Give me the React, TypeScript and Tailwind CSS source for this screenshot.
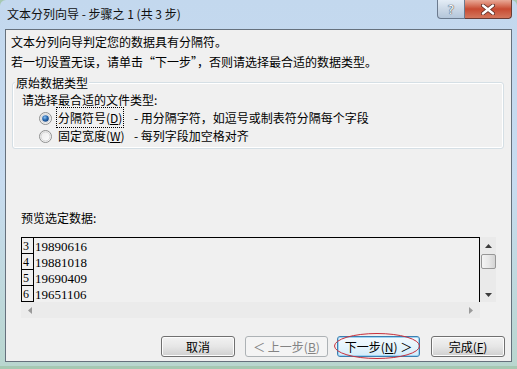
import React from 'react';

const Radio: React.FC<{ checked?: boolean }> = ({ checked }) => (
  <svg width="13" height="13" viewBox="0 0 13 13" className="shrink-0">
    <defs>
      <linearGradient id={checked ? 'rg-on' : 'rg-off'} x1="0" y1="0" x2="1" y2="1">
        <stop offset="0" stopColor="#e9e9e9" />
        <stop offset="1" stopColor="#ffffff" />
      </linearGradient>
      <radialGradient id="dot" cx="0.4" cy="0.35" r="0.7">
        <stop offset="0" stopColor="#8fc3f0" />
        <stop offset="0.5" stopColor="#2c6db4" />
        <stop offset="1" stopColor="#123f7a" />
      </radialGradient>
    </defs>
    <circle cx="6.5" cy="6.5" r="6" fill={`url(#${checked ? 'rg-on' : 'rg-off'})`} stroke="#8e8f8f" />
    <circle cx="6.5" cy="6.5" r="4.5" fill="none" stroke="#d6d6d6" />
    {checked && <circle cx="6.5" cy="6.5" r="3.3" fill="url(#dot)" />}
  </svg>
);

const Arrow: React.FC<{ dir: 'up' | 'down' | 'left' | 'right'; color?: string }> = ({ dir, color = '#3c3c3c' }) => {
  const pts = {
    up: '0,4 7,4 3.5,0',
    down: '0,0 7,0 3.5,4',
    left: '4,0 4,7 0,3.5',
    right: '0,0 0,7 4,3.5',
  }[dir];
  const vertical = dir === 'up' || dir === 'down';
  return (
    <svg width={vertical ? 7 : 4} height={vertical ? 4 : 7}>
      <polygon points={pts} fill={color} />
    </svg>
  );
};

const WinButton: React.FC<{ children: React.ReactNode; width: string; variant?: 'normal' | 'disabled' | 'default' }> = ({
  children,
  width,
  variant = 'normal',
}) => {
  if (variant === 'disabled') {
    return (
      <div className={`${width} h-[21px] flex items-center justify-center rounded-[3px] border border-[#adb2b5] bg-[#f4f4f4] text-[#838383]`}>
        {children}
      </div>
    );
  }
  if (variant === 'default') {
    return (
      <div className={`${width} h-[21px] flex items-center justify-center rounded-[3px] border border-[#3c7fb1] bg-gradient-to-b from-[#f3fafe] via-[#e6f4fc] to-[#d3ecfa] shadow-[inset_0_0_0_1px_#9fd4f3]`}>
        {children}
      </div>
    );
  }
  return (
    <div className={`${width} h-[21px] flex items-center justify-center rounded-[3px] border border-[#707070] bg-gradient-to-b from-[#f2f2f2] via-[#e6e6e6] to-[#cfcfcf] shadow-[inset_0_0_0_1px_#fcfcfc]`}>
      {children}
    </div>
  );
};

const rows = [
  { n: '3', v: '19890616' },
  { n: '4', v: '19881018' },
  { n: '5', v: '19690409' },
  { n: '6', v: '19651106' },
];

export default function App() {
  return (
    <div className="relative w-[517px] h-[369px] overflow-hidden bg-[#a6c8b2] font-['Noto_Sans_CJK_SC',sans-serif] text-[12px] leading-none text-black">
      <div className="flex flex-col h-[366px] px-[5px] pb-[4px] rounded-t-[6px] bg-gradient-to-b from-[#c3d8ee] via-[#c8dcf0] to-[#b9d6cf]">
        {/* title bar */}
        <div className="flex h-[29px] shrink-0 items-start">
          <div className="flex-1 pl-[2px] pt-[7px] text-[12px] leading-[14px] text-[#111]">文本分列向导 - 步骤之 1 (共 3 步)</div>
          <div className="flex h-[19px]">
            <div className="w-[28px] h-[19px] flex items-center justify-center rounded-bl-[4px] border border-t-0 border-[#6b7a8e] bg-gradient-to-b from-[#e4edf6] via-[#cbd8e6] to-[#b4c6da]">
              <span className="text-[13px] leading-none font-['DejaVu_Sans',sans-serif] text-white [text-shadow:0_0_1px_#203040,0_0_1px_#203040]">?</span>
            </div>
            <div className="w-[47px] h-[19px] flex items-center justify-center rounded-br-[4px] border border-t-0 border-l-0 border-[#6b3b33] bg-gradient-to-b from-[#e8a997] via-[#c74a31] to-[#d3765c]">
              <svg width="14" height="11" viewBox="0 0 14 11">
                <path d="M2 1.5 L12 9.5 M12 1.5 L2 9.5" stroke="#5a2a22" strokeWidth="4" strokeLinecap="round" />
                <path d="M2 1.5 L12 9.5 M12 1.5 L2 9.5" stroke="#ffffff" strokeWidth="2.4" strokeLinecap="round" />
              </svg>
            </div>
          </div>
        </div>

        {/* client area */}
        <div className="flex flex-1 flex-col border border-[#66717d] bg-[#f0f0f0]">
          <div className="pt-[2px] pl-[5px]">
            <div className="h-[20px] flex items-center">文本分列向导判定您的数据具有分隔符。</div>
            <div className="h-[20px] flex items-center">若一切设置无误，请单击“下一步”，否则请选择最合适的数据类型。</div>
          </div>

          {/* group box */}
          <div className="relative mt-[10px] ml-[6px] mr-[7px] h-[67px] rounded-[3px] border border-[#d5dfe5] shadow-[inset_0_0_0_1px_#ffffff] pl-[9px] pt-[8px]">
            <div className="absolute -top-[8px] left-[2px] bg-[#f0f0f0] px-[1px] h-[16px] flex items-center">原始数据类型</div>
            <div className="h-[18px] flex items-center">请选择最合适的文件类型:</div>
            <div className="h-[18px] flex items-center pl-[17px]">
              <Radio checked />
              <div className="w-[82px] pl-[4px]">
                <span className="border border-dotted border-black px-[1px] py-[1px]">
                  分隔符号(<span className="underline">D</span>)
                </span>
              </div>
              <span>- 用分隔字符，如逗号或制表符分隔每个字段</span>
            </div>
            <div className="h-[18px] flex items-center pl-[17px]">
              <Radio />
              <div className="w-[82px] pl-[6px]">
                固定宽度(<span className="underline">W</span>)
              </div>
              <span>- 每列字段加空格对齐</span>
            </div>
          </div>

          <div className="mt-[60px] pl-[15px] h-[18px] flex items-center">预览选定数据:</div>

          {/* preview */}
          <div className="mt-[10px] ml-[15px] flex h-[81px] w-[475px]">
            <div className="flex w-[459px] flex-col">
              <div className="h-[65px] overflow-hidden border border-b-0 border-black bg-[#f0f0f0]">
                {rows.map((r) => (
                  <div key={r.n} className="flex h-[16px] shrink-0">
                    <div className="w-[12px] h-[16px] border-r border-b border-black flex items-end pl-[1px] font-['Liberation_Serif',serif] text-[12px] leading-[13px]">
                      {r.n}
                    </div>
                    <div className="pl-[1px] h-[16px] flex items-end font-['Liberation_Serif',serif] text-[13px] leading-[14px]">{r.v}</div>
                  </div>
                ))}
              </div>
              <div className="h-[16px] flex items-center justify-between px-[7px] bg-[#ebebeb]">
                <Arrow dir="left" color="#9a9a9a" />
                <Arrow dir="right" color="#9a9a9a" />
              </div>
            </div>
            <div className="w-[16px] h-[65px] flex flex-col items-center bg-[#eaeaea]">
              <div className="h-[17px] flex items-center justify-center">
                <Arrow dir="up" />
              </div>
              <div className="w-[15px] h-[15px] rounded-[2px] border border-[#979797] bg-gradient-to-r from-[#f4f4f4] via-[#e8e8e8] to-[#d4d4d4]" />
              <div className="flex-1" />
              <div className="h-[14px] flex items-center justify-center">
                <Arrow dir="down" />
              </div>
            </div>
          </div>

          {/* buttons */}
          <div className="mt-[18px] flex justify-end pr-[6px]">
            <WinButton width="w-[74px]">取消</WinButton>
            <div className="w-[10px]" />
            <WinButton width="w-[83px]" variant="disabled">
              ＜ 上一步(<span className="underline">B</span>)
            </WinButton>
            <div className="w-[9px]" />
            <div className="relative">
              <WinButton width="w-[83px]" variant="default">
                下一步(<span className="underline">N</span>) ＞
              </WinButton>
              <svg className="absolute -left-[4px] -top-[4px] pointer-events-none" width="88" height="28" viewBox="0 0 88 28">
                <ellipse cx="44" cy="14" rx="42.5" ry="12.5" fill="none" stroke="#c8303c" strokeWidth="1" />
              </svg>
            </div>
            <div className="w-[11px]" />
            <WinButton width="w-[74px]">
              完成(<span className="underline">F</span>)
            </WinButton>
          </div>
        </div>
      </div>
    </div>
  );
}
